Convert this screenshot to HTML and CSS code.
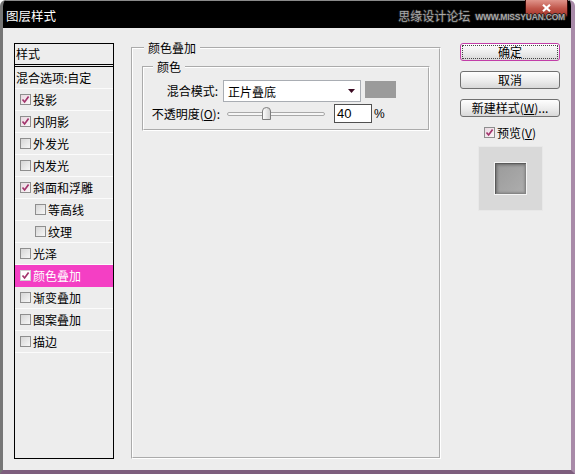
FILE: index.html
```html
<!DOCTYPE html>
<html lang="zh-CN">
<head>
<meta charset="utf-8">
<title>图层样式</title>
<link rel="stylesheet" href="styles.css">
</head>
<body>
<div class="window">
  <div class="titlebar">
    <span class="title">图层样式</span>
    <span class="close" aria-label="关闭"><svg viewBox="0 0 9 8"><path d="M1 0.8 L8 7.2 M8 0.8 L1 7.2"/></svg></span>
    <span class="wm"><span class="wm-cn">思缘设计论坛</span><span class="wm-en">WWW.MISSYUAN.COM</span></span>
  </div>
  <div class="body">
    <div class="styles">
      <div class="hd">样式</div>
      <div class="row blend">混合选项:自定</div>
      <div class="row"><span class="cb on"><svg viewBox="0 0 9 9"><path d="M1.5 4.5 L3.6 7 L7.6 1.6"/></svg></span>投影</div>
      <div class="row"><span class="cb on"><svg viewBox="0 0 9 9"><path d="M1.5 4.5 L3.6 7 L7.6 1.6"/></svg></span>内阴影</div>
      <div class="row"><span class="cb"></span>外发光</div>
      <div class="row"><span class="cb"></span>内发光</div>
      <div class="row"><span class="cb on"><svg viewBox="0 0 9 9"><path d="M1.5 4.5 L3.6 7 L7.6 1.6"/></svg></span>斜面和浮雕</div>
      <div class="row sub"><span class="cb"></span>等高线</div>
      <div class="row sub"><span class="cb"></span>纹理</div>
      <div class="row"><span class="cb"></span>光泽</div>
      <div class="row sel"><span class="cb on"><svg viewBox="0 0 9 9"><path d="M1.5 4.5 L3.6 7 L7.6 1.6"/></svg></span>颜色叠加</div>
      <div class="row"><span class="cb"></span>渐变叠加</div>
      <div class="row"><span class="cb"></span>图案叠加</div>
      <div class="row"><span class="cb"></span>描边</div>
    </div>

    <fieldset class="grp outer">
      <legend class="lg-outer">颜色叠加</legend>
      <fieldset class="grp inner">
        <legend class="lg-inner">颜色</legend>
        <div class="form">
          <span class="lbl">混合模式:</span>
          <div class="ctl">
            <div class="select"><span>正片叠底</span><svg class="arrow" viewBox="0 0 7 4"><path d="M0 0 H7 L3.5 4 Z"/></svg></div>
            <div class="swatch"></div>
          </div>
          <span class="lbl">不透明度(<u>O</u>):</span>
          <div class="ctl">
            <div class="slider">
              <div class="track"></div>
              <svg class="thumb" viewBox="0 0 9 13"><defs><linearGradient id="tg" x1="0" y1="0" x2="1" y2="0"><stop offset="0" stop-color="#ffffff"/><stop offset="1" stop-color="#cfcfcf"/></linearGradient></defs><path d="M0.5 4 Q0.5 0.5 4.5 0.5 Q8.5 0.5 8.5 4 V12.5 H0.5 Z" fill="url(#tg)" stroke="#7d7d7d"/></svg>
            </div>
            <div class="num">40</div>
            <span class="pct">%</span>
          </div>
        </div>
      </fieldset>
    </fieldset>

    <div class="side">
      <div class="btn def">确定</div>
      <div class="btn">取消</div>
      <div class="btn">新建样式(<u>W</u>)...</div>
      <div class="pv"><span class="cb on"><svg viewBox="0 0 9 9"><path d="M1.5 4.5 L3.6 7 L7.6 1.6"/></svg></span>预览(<u>V</u>)</div>
      <div class="preview"><div class="sq"></div></div>
    </div>
  </div>
</div>
</body>
</html>
```

FILE: styles.css
```css
html, body {
  margin: 0;
  padding: 0;
  background: #ffffff;
}
body {
  font-family: "Noto Sans CJK SC", "Noto Sans", sans-serif;
  font-size: 12px;
  color: #000;
}
u { text-decoration: underline; text-underline-offset: 1px; }

.window {
  width: 575px;
  height: 474px;
  box-sizing: border-box;
  border-left: 3px solid #767676;
  border-right: 4px solid #a88aa8;
  border-bottom: 4px solid #7e5e7e;
  border-radius: 6px 6px 0 0;
  background: #ededed;
  display: flex;
  flex-direction: column;
  overflow: hidden;
}

.titlebar {
  height: 28px;
  flex: none;
  box-sizing: border-box;
  background: #000;
  border-top: 1px solid #8a8a8a;
  display: flex;
  align-items: center;
  padding: 2px 6px 0 3px;
  position: relative;
}
.title {
  color: #fff;
  font-size: 12.5px;
  line-height: 16px;
}
.close {
  position: absolute;
  right: 3px;
  top: -1px;
  width: 43px;
  height: 18px;
  box-sizing: border-box;
  border: 1px solid #3a0a08;
  border-top: none;
  border-radius: 0 0 4px 4px;
  background: linear-gradient(#e0948a, #c0564a 50%, #9e2e24);
  display: flex;
  justify-content: center;
  padding-top: 4px;
}
.close svg {
  width: 9px;
  height: 8px;
}
.close path {
  stroke: #fff;
  stroke-width: 2.2;
  fill: none;
}
.wm {
  margin-left: auto;
  display: flex;
  align-items: center;
  gap: 5px;
  position: relative;
  color: #a9a9a9;
  text-shadow: 1px 0 0 #222, -1px 0 0 #222, 0 1px 0 #222, 0 -1px 0 #222;
}
.wm-cn { font-size: 12px; line-height: 16px; }
.wm-en {
  font-family: "Liberation Sans", sans-serif;
  font-weight: bold;
  font-size: 8.5px;
  letter-spacing: -0.2px;
  line-height: 10px;
  margin-top: 2px;
}

.body {
  flex: 1;
  display: flex;
  align-items: flex-start;
  padding: 12px 0 0 11px;
}

/* left list */
.styles {
  flex: none;
  margin-top: 3px;
  width: 100px;
  height: 416px;
  box-sizing: border-box;
  border: 1px solid #000;
}
.hd {
  height: 20px;
  line-height: 20px;
  padding-left: 1px;
  border-bottom: 3px double #000;
}
.row {
  height: 21px;
  border-bottom: 1px solid #fbfbfb;
  display: flex;
  align-items: center;
  padding-left: 5px;
  white-space: nowrap;
}
.row.blend { padding-left: 1px; }
.row.sub { padding-left: 20px; }
.row.sel {
  background: #f43fc4;
  color: #fff;
  border-bottom-color: #f43fc4;
}
.cb {
  flex: none;
  width: 11px;
  height: 11px;
  box-sizing: border-box;
  border: 1px solid #8e8e8e;
  background: linear-gradient(135deg, #d6d6d6, #f7f7f7);
  margin-right: 2px;
  display: flex;
}
.cb.on { background: linear-gradient(135deg, #e8d8e0, #fbf6f8); }
.row.sel .cb { background: #fff; border-color: #d0d0d0; }
.cb svg {
  width: 9px;
  height: 9px;
}
.cb path {
  fill: none;
  stroke: #a3346c;
  stroke-width: 1.7;
}

/* group boxes */
.grp {
  border: 2px groove #ffffff;
  margin: 0;
  min-width: 0;
}
.grp legend {
  padding: 0 4px;
  line-height: 16px;
  font-size: 12px;
}
.outer {
  flex: none;
  margin-left: 17px;
  width: 310px;
  height: 419px;
  box-sizing: border-box;
  padding: 3px 9px 0 9px;
}
.lg-outer { margin-left: 2px; }
.inner {
  padding: 5px 0 6px 0;
}
.lg-inner { margin-left: 9px; }

.form {
  display: grid;
  grid-template-columns: 76px auto;
  column-gap: 3px;
  row-gap: 2px;
  align-items: center;
}
.lbl {
  justify-self: end;
  white-space: nowrap;
  line-height: 16px;
}
.form .lbl:first-child { margin-right: 2px; }
.ctl {
  display: flex;
  align-items: center;
}
.select {
  width: 138px;
  height: 22px;
  box-sizing: border-box;
  border: 1px solid #a9adb3;
  background: #fff;
  display: flex;
  align-items: center;
  padding-left: 4px;
}
.arrow {
  width: 7px;
  height: 4px;
  margin-left: auto;
  margin-right: 5px;
  fill: #3c0a22;
}
.swatch {
  width: 31px;
  height: 17px;
  margin-left: 4px;
  align-self: flex-start;
  margin-top: 1px;
  background: #9b9b9b;
}
.slider {
  position: relative;
  margin-left: 4px;
  width: 98px;
  height: 19px;
  display: flex;
  align-items: center;
}
.track {
  width: 100%;
  height: 4px;
  box-sizing: border-box;
  border: 1px solid #a9a9a9;
  border-radius: 2px;
  background: #f6f6f6;
}
.thumb {
  position: absolute;
  left: 35px;
  top: 3px;
  width: 9px;
  height: 13px;
}
.num {
  margin-left: 9px;
  width: 38px;
  height: 19px;
  box-sizing: border-box;
  border: 1px solid #505050;
  background: #fff;
  padding-left: 2px;
  line-height: 17px;
  font-family: "Liberation Sans", "Noto Sans CJK SC", sans-serif;
  font-size: 13px;
}
.pct {
  margin-left: 2px;
  font-family: "Liberation Sans", sans-serif;
  font-size: 12px;
}

/* right column */
.side {
  flex: none;
  margin-left: 19px;
  margin-top: 3px;
  width: 100px;
  display: flex;
  flex-direction: column;
}
.btn {
  height: 18px;
  box-sizing: border-box;
  border: 1px solid #707070;
  border-radius: 3px;
  background: linear-gradient(#fefefe, #ececec 55%, #d8d8d8);
  text-align: center;
  line-height: 16px;
  margin-bottom: 10px;
}
.btn.def {
  border-color: #c23ea8;
  outline: 1px dotted #444;
  outline-offset: -3px;
}
.pv {
  margin-top: -2px;
  height: 15px;
  display: flex;
  align-items: center;
  justify-content: center;
  line-height: 15px;
}
.preview {
  margin: 6px auto 0;
  width: 65px;
  height: 65px;
  box-sizing: border-box;
  border: 1px solid #e8e8e8;
  background: #d9d9d9;
  display: flex;
  align-items: center;
  justify-content: center;
}
.sq {
  width: 33px;
  height: 33px;
  box-sizing: border-box;
  border: 1px solid #f4f4f4;
  background: linear-gradient(135deg, #9a9a9a, #aeaeae);
  box-shadow: inset 1px 1px 0 #5a5a5a, inset -1px -1px 0 #858585, inset 2px 2px 3px #6a6a6a, inset -2px -2px 2px #8f8f8f;
}
```
